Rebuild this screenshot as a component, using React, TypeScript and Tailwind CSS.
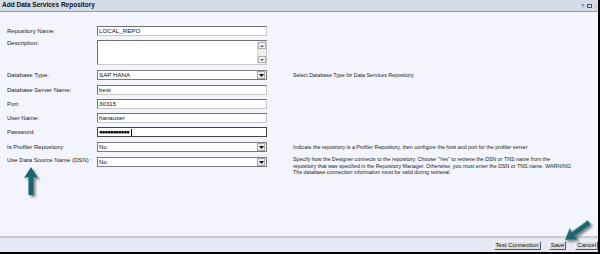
import React from "react";

const inputCls =
  "h-[10px] w-[170px] bg-white border border-t-[#6f6f6f] border-l-[#6f6f6f] border-r-[#c8c8c8] border-b-[#c8c8c8] flex items-center pl-[1px] text-[6.2px] leading-none text-[#111]";

function TextInput({ value, children }: { value?: string; children?: React.ReactNode }) {
  return <div className={inputCls}>{children ?? value}</div>;
}

function Select({ value }: { value: string }) {
  return (
    <div className="h-[10px] w-[170px] bg-white border border-[#7a7a7a] flex items-center justify-between pl-[1px] text-[6.2px] leading-none text-[#111]">
      <span>{value}</span>
      <div className="h-[8px] w-[8px] mr-[1px] bg-[#ececec] border border-[#a8a8a8] flex items-center justify-center">
        <svg width="5" height="3" viewBox="0 0 5 3">
          <polygon points="0,0 5,0 2.5,3" fill="#111" />
        </svg>
      </div>
    </div>
  );
}

function Row({
  label,
  children,
  help,
  mt,
  align = "items-center",
}: {
  label: string;
  children: React.ReactNode;
  help?: React.ReactNode;
  mt: string;
  align?: string;
}) {
  return (
    <div className={`flex ${align} ${mt}`}>
      <div className="w-[90px] text-[6px] leading-none text-[#1a1a1a] whitespace-nowrap">{label}</div>
      {children}
      {help && <div className="ml-[26px] text-[5.3px] leading-[6.5px] text-[#1a1a1a] whitespace-nowrap">{help}</div>}
    </div>
  );
}

function Btn({ children }: { children: React.ReactNode }) {
  return (
    <div className="h-[9px] px-[1px] bg-[#dedede] border border-t-[#f4f4f4] border-l-[#f4f4f4] border-r-[#5a5a5a] border-b-[#5a5a5a] flex items-center text-[6px] leading-none text-[#111]">
      {children}
    </div>
  );
}

export default function App() {
  return (
    <div className="relative w-[600px] h-[254px] flex flex-col bg-[#f4f5fc] border-r-2 border-b-2 border-black overflow-hidden font-['Liberation_Sans',Arial,sans-serif]">
      <div className="h-[12px] shrink-0 bg-[#d5dce8] border-b border-[#8f9aae] flex items-center justify-between pl-[2px]">
        <span className="text-[6.5px] font-bold leading-none text-[#111]">Add Data Services Repository</span>
        <div className="flex items-center gap-[3px] text-[6px] leading-none text-[#44547a] pr-[1px]">
          <span>?</span>
          <span className="w-[5px] h-[4px] border border-[#44547a]" />
          <span>:</span>
        </div>
      </div>

      <div className="flex-1 pt-[14px] pl-[7px]">
        <Row label="Repository Name:" mt="mt-0">
          <TextInput value="LOCAL_REPO" />
        </Row>
        <Row label="Description:" mt="mt-[4px]" align="items-start">
          <div className="h-[25px] w-[170px] bg-white border border-t-[#6f6f6f] border-l-[#6f6f6f] border-r-[#c8c8c8] border-b-[#c8c8c8] flex justify-end">
            <div className="w-[9px] h-full bg-[#ededed] border-l border-[#d8d8d8] flex flex-col justify-between py-[1px]">
              <div className="h-[7px] w-[8px] bg-[#f2f2f2] border border-[#b0b0b0] flex items-center justify-center">
                <svg width="4" height="2" viewBox="0 0 4 2">
                  <polygon points="0,2 4,2 2,0" fill="#555" />
                </svg>
              </div>
              <div className="h-[7px] w-[8px] bg-[#f2f2f2] border border-[#b0b0b0] flex items-center justify-center">
                <svg width="4" height="2" viewBox="0 0 4 2">
                  <polygon points="0,0 4,0 2,2" fill="#555" />
                </svg>
              </div>
            </div>
          </div>
        </Row>
        <Row label="Database Type:" mt="mt-[5px]" help="Select Database Type for Data Services Repository">
          <Select value="SAP HANA" />
        </Row>
        <Row label="Database Server Name:" mt="mt-[5px]">
          <TextInput value="best" />
        </Row>
        <Row label="Port:" mt="mt-[4px]">
          <TextInput value="30315" />
        </Row>
        <Row label="User Name:" mt="mt-[4px]">
          <TextInput value="hanauser" />
        </Row>
        <Row label="Password:" mt="mt-[4px]">
          <div className="h-[10px] w-[170px] bg-white border border-[#444] flex items-center pl-[1px] text-[6.5px] leading-none text-[#111] tracking-[-1.2px]">
            <span>●●●●●●●●●●●</span>
            <span className="ml-[2px] w-[1px] h-[7px] bg-black" />
          </div>
        </Row>
        <Row
          label="Is Profiler Repository:"
          mt="mt-[5px]"
          help="Indicate the repository is a Profiler Repository, then configure the host and port for the profiler server"
        >
          <Select value="No" />
        </Row>
        <Row
          label="Use Data Source Name (DSN) :"
          mt="mt-[5px]"
          align="items-start"
          help={
            <div className="-mt-[1px]">
              <div>Specify how the Designer connects to the repository. Choose "Yes" to retrieve the DSN or TNS name from the</div>
              <div>repository that was specified in the Repository Manager. Otherwise, you must enter the DSN or TNS name. WARNING:</div>
              <div>The database connection information must be valid during retrieval.</div>
            </div>
          }
        >
          <Select value="No" />
        </Row>
      </div>

      <div className="h-[16px] shrink-0 border-t-2 border-[#c8cad0] bg-[#e6e9f3] flex items-center justify-end pr-0">
        <Btn>Test Connection</Btn>
        <div className="ml-[8px]">
          <Btn>Save</Btn>
        </div>
        <div className="ml-[9px]">
          <Btn>Cancel</Btn>
        </div>
      </div>

      <svg className="absolute left-0 top-0 pointer-events-none" width="600" height="254" viewBox="0 0 600 254">
        <defs>
          <filter id="sh" x="-50%" y="-50%" width="200%" height="200%">
            <feGaussianBlur in="SourceAlpha" stdDeviation="1.2" />
            <feOffset dx="2" dy="2" result="b" />
            <feComponentTransfer>
              <feFuncA type="linear" slope="0.45" />
            </feComponentTransfer>
            <feMerge>
              <feMergeNode />
              <feMergeNode in="SourceGraphic" />
            </feMerge>
          </filter>
        </defs>
        <g filter="url(#sh)">
          <polygon
            points="0,0 7,11 2.6,10 2.6,28 -2.6,28 -2.6,10 -7,11"
            fill="#1d6570"
            transform="translate(31,167)"
          />
          <polygon
            points="0,0 7,11 2.6,10 2.6,30 -2.6,30 -2.6,10 -7,11"
            fill="#1d6570"
            transform="translate(565,240) rotate(-125.8)"
          />
        </g>
      </svg>
    </div>
  );
}
